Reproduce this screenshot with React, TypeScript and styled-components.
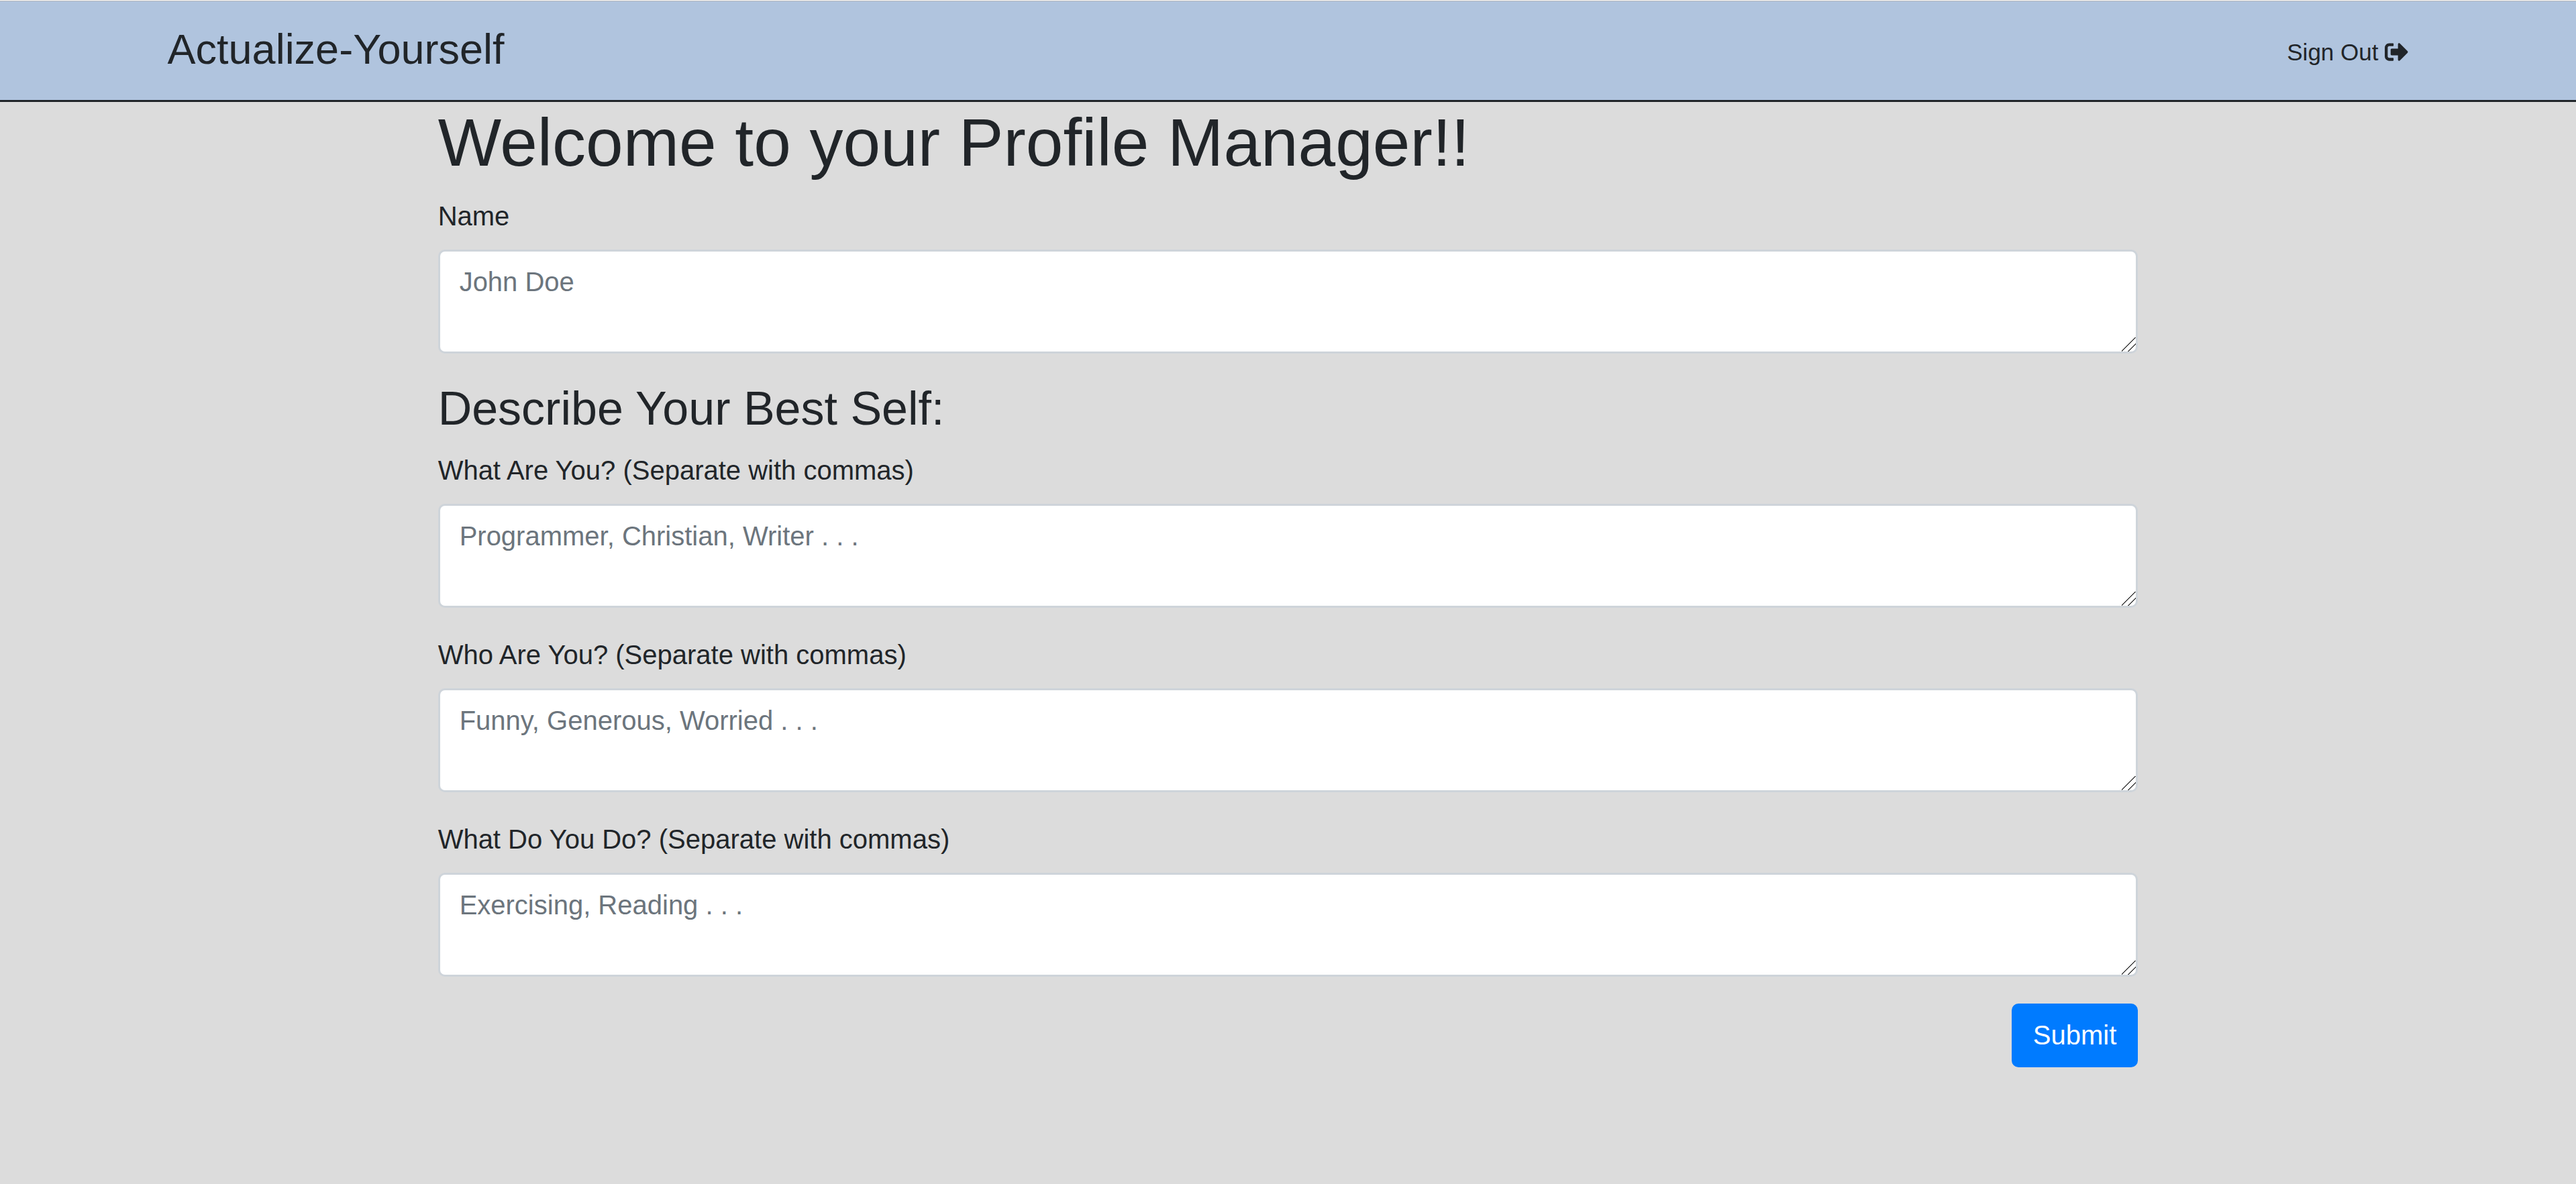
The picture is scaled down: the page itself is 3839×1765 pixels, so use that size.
import React from "react";
import styled, { createGlobalStyle } from "styled-components";
import { FaSignOutAlt } from "react-icons/fa";

const GlobalStyle = createGlobalStyle`
  *, *::before, *::after {
    box-sizing: border-box;
  }
  html {
    background: #dcdcdc;
  }
  body {
    margin: 0;
    color: #212529;
    font-family: Arial, "Liberation Sans", sans-serif;
    font-size: 40px;
    line-height: 60px;
  }
`;

const TopEdge = styled.div`
  height: 2px;
  background: #fff;
  border-bottom: 1px solid #b4b6b9;
`;

const Header = styled.header`
  display: flex;
  align-items: center;
  justify-content: space-between;
  padding: 26px 6.5% 31px;
  background: #b0c4de;
  border-bottom: 3px solid #212529;
`;

const Brand = styled.a`
  color: inherit;
  font-size: 63px;
  line-height: 90px;
  text-decoration: none;
`;

const SignOut = styled.button`
  display: flex;
  align-items: center;
  gap: 10px;
  margin: 0;
  padding: 9px 0 0;
  border: 0;
  background: none;
  color: inherit;
  font: inherit;
  font-size: 35px;
  line-height: 54px;
  cursor: pointer;
`;

const Main = styled.main`
  width: 66%;
  margin: 0 auto;
`;

const Title = styled.h1`
  margin: 0 0 20px;
  font-size: 100px;
  font-weight: 400;
  line-height: 120px;
`;

const SectionTitle = styled.h2`
  margin: 0 0 20px;
  font-size: 70px;
  font-weight: 400;
  line-height: 84px;
`;

const FieldGroup = styled.div`
  display: flex;
  flex-direction: column;
  gap: 20px;
  margin-bottom: 40px;
`;

/* The two diagonal grip lines are painted in the bottom right corner,
   under a transparent native resizer. */
const TextArea = styled.textarea`
  display: block;
  width: 100%;
  height: 155px;
  margin: 0;
  padding: 15px 29px 11px;
  border: 3px solid #ced4da;
  border-radius: 10px;
  background-color: #fff;
  background-image: linear-gradient(
    135deg,
    transparent 0 14px,
    #4c4c4c 14px 15px,
    transparent 15px 21px,
    #4c4c4c 21px 22px,
    transparent 22px
  );
  background-position: right bottom;
  background-repeat: no-repeat;
  background-size: 21px 21px;
  color: #495057;
  font: inherit;
  overflow: auto;
  resize: vertical;

  &::placeholder {
    color: #6c757d;
    opacity: 1;
  }

  &::-webkit-resizer {
    background: transparent;
  }
`;

const Actions = styled.div`
  display: flex;
  justify-content: flex-end;
`;

const SubmitButton = styled.button`
  margin: 0;
  padding: 15px 30px 16px;
  border: 2px solid #007bff;
  border-radius: 10px;
  background: #007bff;
  color: #fff;
  font: inherit;
  cursor: pointer;
`;

interface FieldProps {
  id: string;
  label: string;
  placeholder: string;
}

function Field({ id, label, placeholder }: FieldProps) {
  return (
    <FieldGroup>
      <label htmlFor={id}>{label}</label>
      <TextArea id={id} name={id} rows={2} placeholder={placeholder} />
    </FieldGroup>
  );
}

const traitFields: FieldProps[] = [
  {
    id: "what-are-you",
    label: "What Are You? (Separate with commas)",
    placeholder: "Programmer, Christian, Writer . . .",
  },
  {
    id: "who-are-you",
    label: "Who Are You? (Separate with commas)",
    placeholder: "Funny, Generous, Worried . . .",
  },
  {
    id: "what-do-you-do",
    label: "What Do You Do? (Separate with commas)",
    placeholder: "Exercising, Reading . . .",
  },
];

export default function App() {
  return (
    <>
      <GlobalStyle />
      <TopEdge />
      <Header>
        <Brand href="#">Actualize-Yourself</Brand>
        <SignOut type="button">
          Sign Out <FaSignOutAlt aria-hidden="true" />
        </SignOut>
      </Header>
      <Main>
        <Title>Welcome to your Profile Manager!!</Title>
        <form onSubmit={(event) => event.preventDefault()}>
          <Field id="name" label="Name" placeholder="John Doe" />
          <SectionTitle>Describe Your Best Self:</SectionTitle>
          {traitFields.map((field) => (
            <Field key={field.id} {...field} />
          ))}
          <Actions>
            <SubmitButton type="submit">Submit</SubmitButton>
          </Actions>
        </form>
      </Main>
    </>
  );
}
